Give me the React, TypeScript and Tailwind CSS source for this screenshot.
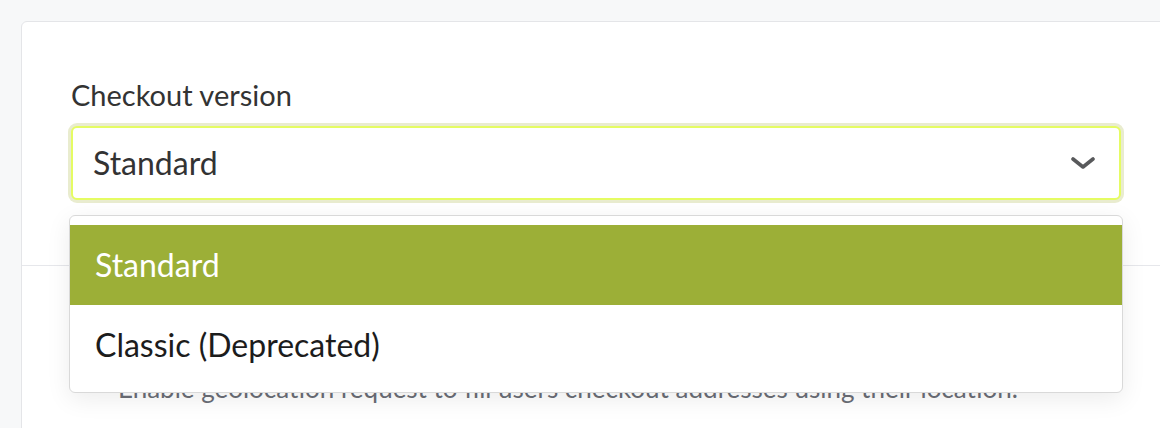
import { useState } from "react";

const options = ["Standard", "Classic (Deprecated)"];

function Chevron() {
  return (
    <svg
      className="h-[12px] w-[24px] text-[#58595b]"
      fill="none"
      viewBox="0 0 24 12"
    >
      <path
        d="M2 2l10 8 10-8"
        stroke="currentColor"
        strokeLinecap="round"
        strokeLinejoin="round"
        strokeWidth={3.6}
      />
    </svg>
  );
}

export default function App() {
  const [value, setValue] = useState("Standard");
  const [open, setOpen] = useState(true);

  return (
    <div
      className="h-[428px] overflow-hidden bg-[#f7f8f9] pl-[21px] pt-[21px]"
      style={{ fontFamily: "Lato, 'Open Sans', sans-serif" }}
    >
      <div className="h-[440px] w-[1200px] rounded-tl-[6px] border border-[#e4e5e8] bg-white">
        <div className="h-[244px] border-b border-[#e6e7eb] pl-[49px] pt-[55px]">
          <label className="block text-[29px] leading-[36px] text-[#333333]">
            Checkout version
          </label>
          <div className="relative mt-[13px] w-[1050px]">
            <button
              className="flex h-[74px] w-full items-center justify-between rounded-[6px] border-2 border-[#e5fc63] bg-white pl-[20px] pr-[24px] text-left text-[32px] text-[#333333] shadow-[0_0_0_3px_#e9eccf] outline-none"
              onClick={() => setOpen(!open)}
              type="button"
            >
              {value}
              <Chevron />
            </button>
            {open ? (
              <ul className="absolute left-[-2px] top-[89px] z-10 w-[1054px] rounded-[6px] border border-[#d9d9d9] bg-white pb-[7px] pt-[9px] shadow-[0_6px_24px_rgba(0,0,0,0.08)]">
                {options.map((option) => (
                  <li
                    className={`flex h-[80px] cursor-pointer items-center pl-[25px] text-[32px] ${
                      option === value
                        ? "bg-[#9caf37] text-white"
                        : "text-[#1c1c1c]"
                    }`}
                    key={option}
                    onClick={() => {
                      setValue(option);
                      setOpen(false);
                    }}
                  >
                    {option}
                  </li>
                ))}
              </ul>
            ) : null}
          </div>
        </div>
        <div className="pl-[96px] pt-[105px]">
          <p className="text-[26px] leading-[34px] text-[#6a6d76]">
            Enable geolocation request to fill users checkout addresses using
            their location.
          </p>
        </div>
      </div>
    </div>
  );
}
